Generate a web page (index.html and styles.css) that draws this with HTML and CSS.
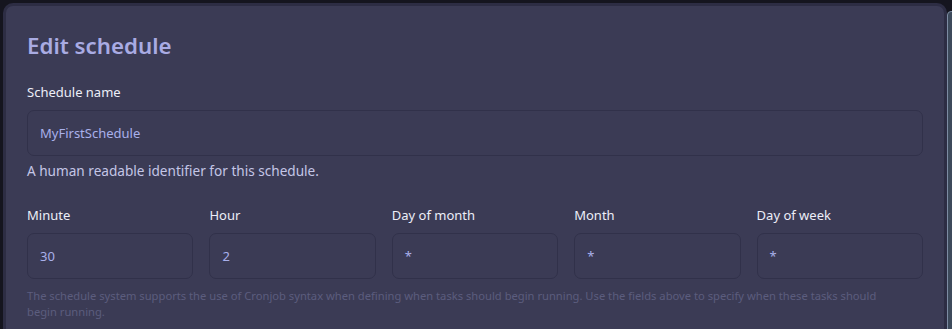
FILE: index.html
```html
<!DOCTYPE html>
<html>
<head>
<meta charset="utf-8">
<link rel="stylesheet" href="styles.css">
</head>
<body>
<div class="layout">
  <div class="card">
    <h1 class="title">Edit schedule</h1>
    <div class="field">
      <label class="label">Schedule name</label>
      <div class="input">MyFirstSchedule</div>
      <p class="help">A human readable identifier for this schedule.</p>
    </div>
    <div class="cron">
      <div class="col"><label class="label">Minute</label><div class="input">30</div></div>
      <div class="col"><label class="label">Hour</label><div class="input">2</div></div>
      <div class="col"><label class="label">Day of month</label><div class="input star">*</div></div>
      <div class="col"><label class="label">Month</label><div class="input star">*</div></div>
      <div class="col"><label class="label">Day of week</label><div class="input star">*</div></div>
    </div>
    <p class="note">The schedule system supports the use of Cronjob syntax when defining when tasks should begin running. Use the fields above to specify when these tasks should begin running.</p>
  </div>
  <div class="side"></div>
</div>
</body>
</html>
```
FILE: styles.css
```css
html, body {
  margin: 0;
  padding: 0;
  background: #15151f;
  overflow: hidden;
  height: 329px;
}
body {
  font-family: "Noto Sans", "Open Sans", sans-serif;
}
.layout {
  display: flex;
  align-items: flex-start;
  padding: 3px 0 0 3px;
  width: 949px;
  height: 326px;
  overflow: hidden;
}
.card {
  flex: 0 0 944px;
  box-sizing: border-box;
  background: #3b3b55;
  border: 3px solid #2d2d44;
  border-radius: 10px;
  padding: 24px 21px 40px 21px;
  height: 360px;
}
.side {
  flex: 0 0 40px;
  margin-top: 8px;
  height: 340px;
  box-sizing: border-box;
  border: 1px solid #7d8ca3;
  border-radius: 4px 0 0 0;
  background: #3d4a5b;
}
.title {
  margin: 0 0 21px 0;
  font-size: 22.3px;
  line-height: 32px;
  font-weight: 600;
  color: #a9abe3;
}
.label {
  display: block;
  font-size: 13px;
  line-height: 18px;
  color: #eceef8;
  margin-bottom: 9px;
}
.input {
  box-sizing: border-box;
  height: 46px;
  border: 1px solid #31314a;
  border-radius: 7px;
  padding: 0 12px;
  display: flex;
  align-items: center;
  font-size: 13px;
  color: #a9b0ea;
}
.help {
  margin: 5px 0 0 0;
  font-size: 13.6px;
  line-height: 20px;
  color: #c4c6e6;
}
.cron {
  display: grid;
  grid-template-columns: repeat(5, 1fr);
  gap: 16px;
  margin-top: 25px;
}
.note {
  margin: 9px 0 0 0;
  max-width: 870px;
  font-size: 11.2px;
  line-height: 16px;
  color: #5c5d7e;
}
```
